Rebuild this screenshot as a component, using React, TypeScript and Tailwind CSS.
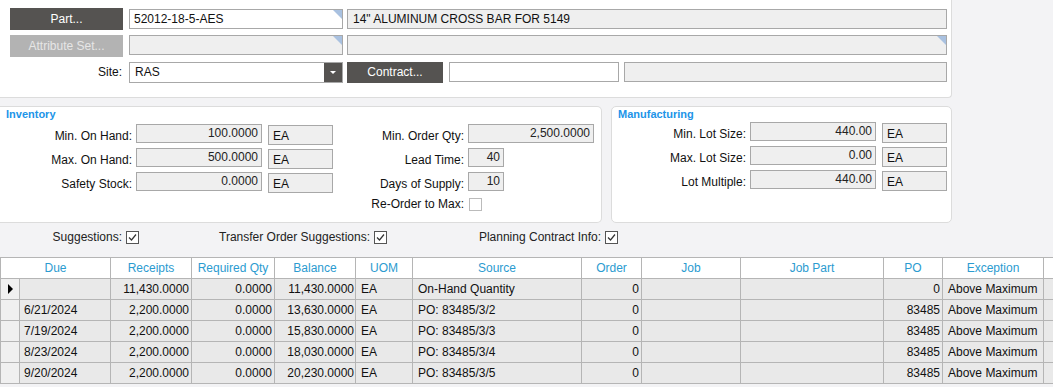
import React from 'react';

const rows = [
  { due: '', receipts: '11,430.0000', req: '0.0000', bal: '11,430.0000', uom: 'EA', source: 'On-Hand Quantity', order: '0', po: '0', exc: 'Above Maximum', current: true },
  { due: '6/21/2024', receipts: '2,200.0000', req: '0.0000', bal: '13,630.0000', uom: 'EA', source: 'PO: 83485/3/2', order: '0', po: '83485', exc: 'Above Maximum' },
  { due: '7/19/2024', receipts: '2,200.0000', req: '0.0000', bal: '15,830.0000', uom: 'EA', source: 'PO: 83485/3/3', order: '0', po: '83485', exc: 'Above Maximum' },
  { due: '8/23/2024', receipts: '2,200.0000', req: '0.0000', bal: '18,030.0000', uom: 'EA', source: 'PO: 83485/3/4', order: '0', po: '83485', exc: 'Above Maximum' },
  { due: '9/20/2024', receipts: '2,200.0000', req: '0.0000', bal: '20,230.0000', uom: 'EA', source: 'PO: 83485/3/5', order: '0', po: '83485', exc: 'Above Maximum' },
];

function Corner() {
  return <span className="absolute right-0 top-0 w-0 h-0 border-t-[9px] border-l-[9px] border-t-[#a9c1e0] border-l-transparent" />;
}

function Check({ checked }: { checked?: boolean }) {
  return (
    <svg width="13" height="13" viewBox="0 0 13 13" className="shrink-0">
      <rect x="0.5" y="0.5" width="12" height="12" fill="white" stroke={checked ? '#555' : '#bbb'} />
      {checked && <path d="M3 6.5 L5.5 9 L10 3.5" fill="none" stroke="#333" strokeWidth="1.2" />}
    </svg>
  );
}

function NumRow({ label, value, labelW, fieldW, unit, unitW = 65 }: { label: string; value: string; labelW: number; fieldW: number; unit?: string; unitW?: number }) {
  return (
    <div className="flex items-start h-[24px]">
      <div className="text-right pr-[4px] pt-[3px]" style={{ width: labelW }}>{label}</div>
      <div className="h-[19px] bg-[#efefef] border border-[#a8a8a8] text-right pr-[3px] leading-[16px] text-[#222]" style={{ width: fieldW }}>{value}</div>
      {unit && <div className="ml-[6px] h-[20px] bg-[#efefef] border border-[#a8a8a8] pl-[4px] leading-[20px] mt-[1px]" style={{ width: unitW }}>{unit}</div>}
    </div>
  );
}

export default function App() {
  return (
    <div className="w-[1053px] h-[387px] overflow-hidden bg-[#f3f3f5] text-[12px] text-[#111] font-['Liberation_Sans',Arial,sans-serif]">
      {/* header panel */}
      <div className="w-[952px] h-[98px] bg-white border-r border-b border-[#dcdcdc] rounded-br-[4px] pl-[10px] pt-[8px]">
        <div className="flex items-start">
          <div className="w-[113px] h-[22px] bg-[#555351] text-white text-center leading-[22px]">Part...</div>
          <div className="relative ml-[6px] mt-[1px] w-[214px] h-[20px] border border-[#a8a8a8] pl-[4px] leading-[18px]">52012-18-5-AES<Corner /></div>
          <div className="ml-[4px] mt-[1px] w-[600px] h-[20px] border border-[#a8a8a8] bg-[#efefef] pl-[5px] leading-[18px]">14" ALUMINUM CROSS BAR FOR 5149</div>
        </div>
        <div className="flex items-start mt-[5px]">
          <div className="w-[113px] h-[22px] bg-[#b3b3b3] text-[#e6e6e6] text-center leading-[22px]">Attribute Set...</div>
          <div className="relative ml-[6px] w-[214px] h-[20px] border border-[#a8a8a8] bg-[#efefef]"><Corner /></div>
          <div className="relative ml-[4px] w-[600px] h-[20px] border border-[#a8a8a8] bg-[#efefef]"><Corner /></div>
        </div>
        <div className="flex items-start mt-[5px]">
          <div className="w-[113px] h-[21px] text-right pr-[1px] leading-[21px]">Site:</div>
          <div className="ml-[6px] w-[214px] h-[21px] border border-[#a8a8a8] flex">
            <div className="flex-1 pl-[5px] leading-[19px]">RAS</div>
            <div className="w-[18px] h-full bg-[#555351] flex items-center justify-center">
              <span className="w-0 h-0 border-l-[3px] border-r-[3px] border-t-[3px] border-l-transparent border-r-transparent border-t-white" />
            </div>
          </div>
          <div className="ml-[4px] w-[96px] h-[21px] bg-[#555351] text-white text-center leading-[21px]">Contract...</div>
          <div className="ml-[6px] w-[170px] h-[20px] border border-[#a8a8a8]" />
          <div className="ml-[5px] w-[323px] h-[20px] border border-[#a8a8a8] bg-[#efefef]" />
        </div>
      </div>

      {/* inventory + manufacturing */}
      <div className="flex mt-[8px] h-[117px]">
        <div className="w-[602px] h-full bg-white border-t border-r border-b border-[#dcdcdc] rounded-r-[5px] pl-[6px] pt-[1px]">
          <div className="text-[#2194e8] font-bold text-[11px] leading-[12px]">Inventory</div>
          <div className="flex mt-[4px] ml-[-6px]">
            <div>
              <NumRow label="Min. On Hand:" value="100.0000" labelW={136} fieldW={126} unit="EA" />
              <NumRow label="Max. On Hand:" value="500.0000" labelW={136} fieldW={126} unit="EA" />
              <NumRow label="Safety Stock:" value="0.0000" labelW={136} fieldW={126} unit="EA" />
            </div>
            <div>
              <NumRow label="Min. Order Qty:" value="2,500.0000" labelW={135} fieldW={126} />
              <NumRow label="Lead Time:" value="40" labelW={135} fieldW={36} />
              <NumRow label="Days of Supply:" value="10" labelW={135} fieldW={36} />
              <div className="flex items-center h-[16px]">
                <div className="w-[135px] text-right pr-[4px]">Re-Order to Max:</div>
                <div className="ml-[1px]"><Check /></div>
              </div>
            </div>
          </div>
        </div>
        <div className="ml-[9px] w-[341px] h-full bg-white border border-[#dcdcdc] rounded-[5px] pl-[6px] pt-[1px]">
          <div className="text-[#2194e8] font-bold text-[11px] leading-[12px]">Manufacturing</div>
          <div className="mt-[2px] ml-[-7px]">
            <NumRow label="Min. Lot Size:" value="440.00" labelW={139} fieldW={126} unit="EA" />
            <NumRow label="Max. Lot Size:" value="0.00" labelW={139} fieldW={126} unit="EA" />
            <NumRow label="Lot Multiple:" value="440.00" labelW={139} fieldW={126} unit="EA" />
          </div>
        </div>
      </div>

      {/* options */}
      <div className="flex items-start h-[34px] pt-[8px] text-[#222]">
        <div className="w-[126px] text-right pr-[4px] leading-[13px]">Suggestions:</div>
        <Check checked />
        <div className="w-[235px] text-right pr-[4px] leading-[13px]">Transfer Order Suggestions:</div>
        <Check checked />
        <div className="w-[218px] text-right pr-[4px] leading-[13px]">Planning Contract Info:</div>
        <Check checked />
      </div>

      {/* grid */}
      <table className="border-collapse table-fixed w-[1060px] border-t border-[#b5b5b5]">
        <colgroup>
          {[19, 91, 81, 83, 81, 57, 169, 60, 99, 143, 59, 101, 17].map((w, i) => <col key={i} style={{ width: w }} />)}
        </colgroup>
        <thead>
          <tr className="h-[21px] bg-white text-[#2b9bd0]">
            <th colSpan={2} className="border border-[#b5b5b5] font-normal">Due</th>
            {['Receipts', 'Required Qty', 'Balance', 'UOM', 'Source', 'Order', 'Job', 'Job Part', 'PO', 'Exception', ''].map((h) => (
              <th key={h} className="border border-[#b5b5b5] font-normal">{h}</th>
            ))}
          </tr>
        </thead>
        <tbody>
          {rows.map((r, i) => (
            <tr key={i} className="h-[21px] bg-[#e9e9e9]">
              <td className="border border-[#b5b5b5] bg-[#f0f0f0] p-0">
                {r.current && <span className="block ml-[7px] w-0 h-0 border-t-[5px] border-b-[5px] border-l-[5px] border-t-transparent border-b-transparent border-l-black" />}
              </td>
              <td className="border border-[#b5b5b5] pl-[4px]">{r.due}</td>
              <td className="border border-[#b5b5b5] text-right pr-[2px]">{r.receipts}</td>
              <td className="border border-[#b5b5b5] text-right pr-[2px]">{r.req}</td>
              <td className="border border-[#b5b5b5] text-right pr-[1px]">{r.bal}</td>
              <td className="border border-[#b5b5b5] pl-[5px]">{r.uom}</td>
              <td className="border border-[#b5b5b5] pl-[5px]">{r.source}</td>
              <td className="border border-[#b5b5b5] text-right pr-[2px]">{r.order}</td>
              <td className="border border-[#b5b5b5]"></td>
              <td className="border border-[#b5b5b5]"></td>
              <td className="border border-[#b5b5b5] text-right pr-[2px]">{r.po}</td>
              <td className="border border-[#b5b5b5] pl-[5px]">{r.exc}</td>
              <td className="border border-[#b5b5b5]"></td>
            </tr>
          ))}
        </tbody>
      </table>
    </div>
  );
}
